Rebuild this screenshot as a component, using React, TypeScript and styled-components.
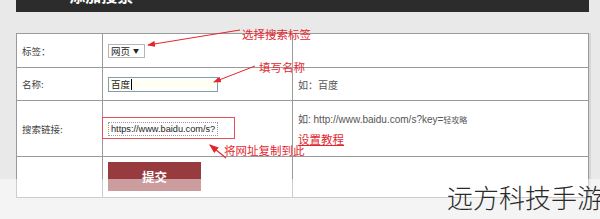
import React from 'react';
import styled, { createGlobalStyle } from 'styled-components';

const GlobalStyle = createGlobalStyle`
  html, body {
    margin: 0;
    padding: 0;
    background: #e9e9e9;
    font-family: "Liberation Sans", "Noto Sans CJK SC", sans-serif;
  }
`;

const RED = '#e3262e';

const rows = [
  { label: '标签：', kind: 'select', hint: '' },
  { label: '名称:', kind: 'name', hint: '如：百度' },
  { label: '搜索链接:', kind: 'url', hint: 'url' },
  { label: '', kind: 'submit', hint: '' },
];

const rowHeights = [34, 33, 56, 41];

function App() {
  return (
    <>
      <GlobalStyle />
      <Page>
        <Header>
          <BackMark>‹</BackMark>
          <HeaderTitle>添加搜索</HeaderTitle>
        </Header>

        <Table>
          {rows.map((row, i) => (
            <React.Fragment key={i}>
              <LabelCell style={{ height: rowHeights[i] }}>{row.label}</LabelCell>
              <FieldCell $top={row.kind === 'submit'} style={{ height: rowHeights[i] }}>
                {row.kind === 'select' && (
                  <SelectBox>
                    网页 <SelectArrow>▼</SelectArrow>
                  </SelectBox>
                )}
                {row.kind === 'name' && (
                  <NameInput>
                    百度<Caret />
                  </NameInput>
                )}
                {row.kind === 'url' && <UrlInput>https://www.baidu.com/s?</UrlInput>}
                {row.kind === 'submit' && <SubmitButton>提交</SubmitButton>}
              </FieldCell>
              <HintCell $stacked={row.kind === 'url'} style={{ height: rowHeights[i] }}>
                {row.kind === 'url' ? (
                  <>
                    <HintText>
                      如: http://www.baidu.com/s?key=<Small>轻攻略</Small>
                    </HintText>
                    <GuideLink>设置教程</GuideLink>
                  </>
                ) : (
                  <HintText>{row.hint}</HintText>
                )}
              </HintCell>
            </React.Fragment>
          ))}
        </Table>

        <Arrows width="600" height="219" viewBox="0 0 600 219">
          <defs>
            <marker id="head" markerWidth="8" markerHeight="6" refX="7" refY="3" orient="auto">
              <path d="M0,0 L8,3 L0,6 Z" fill={RED} />
            </marker>
          </defs>
          <line x1="240" y1="30" x2="148" y2="45" stroke={RED} strokeWidth="1" markerEnd="url(#head)" />
          <line x1="255" y1="66" x2="214" y2="82" stroke={RED} strokeWidth="1" markerEnd="url(#head)" />
          <line x1="226" y1="158" x2="210" y2="145" stroke={RED} strokeWidth="1.2" markerEnd="url(#head)" />
        </Arrows>

        <Highlight />
        <Note style={{ left: 242, top: 27 }}>选择搜索标签</Note>
        <Note style={{ left: 259, top: 60 }}>填写名称</Note>
        <Note style={{ left: 224, top: 143 }}>将网址复制到此</Note>

        <Fade>
          <Watermark>远方科技手游</Watermark>
        </Fade>
      </Page>
    </>
  );
}

export default App;

const Page = styled.div`
  position: relative;
  width: 600px;
  height: 219px;
  overflow: hidden;
`;

const Header = styled.div`
  margin-left: 16px;
  width: 573px;
  height: 12px;
  background: #2c2c2c;
  overflow: hidden;
  display: flex;
  align-items: flex-end;
  color: #fff;
  font-weight: bold;
`;

const BackMark = styled.span`
  margin-left: 20px;
  font-size: 16px;
  line-height: 16px;
  margin-bottom: 9px;
`;

const HeaderTitle = styled.span`
  margin-left: 28px;
  font-size: 16px;
  line-height: 16px;
  margin-bottom: 9px;
  font-family: "Noto Sans CJK SC", sans-serif;
`;

const Table = styled.div`
  margin: 21px 0 0 16px;
  width: 573px;
  display: grid;
  grid-template-columns: 86px 190px 296px;
  border-top: 1px solid #9a9a9a;
  border-left: 1px solid #9a9a9a;
  background: #fff;
  box-sizing: border-box;
  box-shadow: 2px 0 0 #d6d6d6;
`;

const Cell = styled.div`
  box-sizing: border-box;
  border-right: 1px solid #9a9a9a;
  border-bottom: 1px solid #9a9a9a;
  padding-left: 5px;
  display: flex;
`;

const LabelCell = styled(Cell)`
  align-items: center;
  font-family: "Noto Sans CJK SC", sans-serif;
  font-size: 9.5px;
  color: #444;
`;

const FieldCell = styled(Cell)<{ $top?: boolean }>`
  align-items: ${(p) => (p.$top ? 'flex-start' : 'center')};
  padding-top: ${(p) => (p.$top ? '5px' : '0')};
`;

const HintCell = styled(Cell)<{ $stacked?: boolean }>`
  flex-direction: column;
  justify-content: ${(p) => (p.$stacked ? 'flex-start' : 'center')};
  padding-top: ${(p) => (p.$stacked ? '10px' : '0')};
  gap: 7px;
`;

const HintText = styled.span`
  font-size: 10px;
  color: #555;
  white-space: nowrap;
`;

const Small = styled.span`
  font-size: 8px;
`;

const GuideLink = styled.span`
  font-family: "Noto Sans CJK SC", sans-serif;
  font-size: 11.5px;
  line-height: 12px;
  color: ${RED};
  text-decoration: underline;
  align-self: flex-start;
`;

const SelectBox = styled.div`
  box-sizing: border-box;
  width: 37px;
  height: 14px;
  border: 1px solid #b5b5b5;
  background: #fff;
  font-family: "Noto Sans CJK SC", sans-serif;
  font-size: 9.5px;
  line-height: 12px;
  color: #222;
  padding-left: 2px;
  display: flex;
  align-items: center;
  gap: 3px;
`;

const SelectArrow = styled.span`
  font-size: 6px;
`;

const NameInput = styled.div`
  box-sizing: border-box;
  width: 110px;
  height: 15px;
  border: 1px solid #7f9db9;
  background: #fffff4;
  font-family: "Noto Sans CJK SC", sans-serif;
  font-size: 9.5px;
  color: #222;
  padding-left: 2px;
  display: flex;
  align-items: center;
`;

const Caret = styled.span`
  width: 1px;
  height: 11px;
  background: #000;
  margin-left: 1px;
`;

const UrlInput = styled.div`
  box-sizing: border-box;
  width: 110px;
  height: 14px;
  border: 1px dotted #9a9a9a;
  background: #fff;
  font-size: 9.2px;
  color: #222;
  padding-left: 2px;
  display: flex;
  align-items: center;
  white-space: nowrap;
  overflow: hidden;
`;

const SubmitButton = styled.div`
  width: 93px;
  height: 29px;
  background: #973b3e;
  color: #fff;
  font-family: "Noto Sans CJK SC", sans-serif;
  font-weight: bold;
  font-size: 12.5px;
  display: flex;
  align-items: center;
  justify-content: center;
`;

const Arrows = styled.svg`
  position: absolute;
  left: 0;
  top: 0;
  pointer-events: none;
`;

const Highlight = styled.div`
  position: absolute;
  left: 102px;
  top: 117px;
  width: 133px;
  height: 22px;
  box-sizing: border-box;
  border: 1px solid #e0505a;
`;

const Note = styled.span`
  position: absolute;
  font-family: "Noto Sans CJK SC", sans-serif;
  font-size: 11.5px;
  line-height: 14px;
  color: ${RED};
  white-space: nowrap;
`;

const Fade = styled.div`
  position: absolute;
  left: 0;
  top: 179px;
  width: 600px;
  height: 40px;
  background: rgba(255, 255, 255, 0.5);
`;

const Watermark = styled.span`
  position: absolute;
  left: 447px;
  top: 3px;
  font-family: "Noto Sans CJK SC", sans-serif;
  font-weight: 300;
  font-size: 26px;
  line-height: 30px;
  color: #2a2a2a;
  white-space: nowrap;
`;
